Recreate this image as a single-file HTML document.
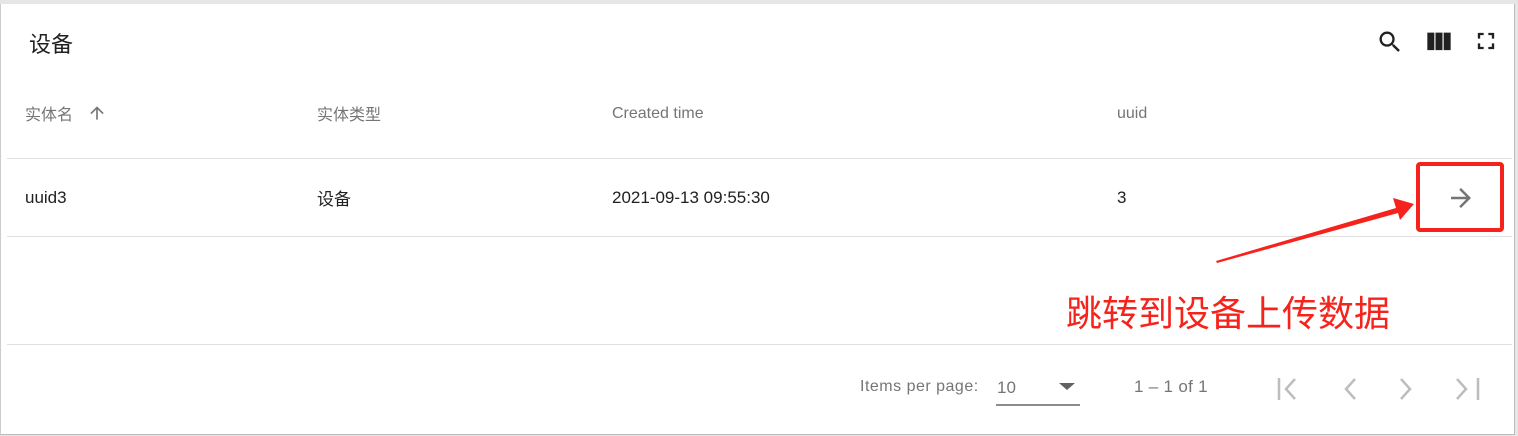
<!DOCTYPE html>
<html><head><meta charset="utf-8"><style>
*{margin:0;padding:0;box-sizing:border-box}
body{width:1518px;height:436px;background:#e6e6e6;position:relative;overflow:hidden;font-family:"Liberation Sans","Noto Sans CJK SC",sans-serif}
.card{position:absolute;left:0;top:4px;width:1515px;height:431px;background:#fff;border-left:1px solid #ccc;border-right:1px solid #bbb;border-bottom:1px solid #bbb}
.t{position:absolute;white-space:nowrap}
.h{color:#757575;font-size:16px}
.c{color:#212121;font-size:17px}
.line{position:absolute;left:7px;right:6px;height:1px;background:#e0e0e0}
</style></head><body>
<div class="card"></div>
<div class="t" style="left:29px;top:27px;font-size:22px;color:#212121">设备</div>
<svg style="position:absolute;left:1376px;top:28px" width="28" height="28" viewBox="0 0 24 24"><path fill="#212121" d="M15.5 14h-.79l-.28-.27A6.470 6.470 0 0 0 16 9.5 6.5 6.5 0 1 0 9.5 16c1.61 0 3.090-.59 4.230-1.57l.27.28v.79l5 4.99L20.49 19l-4.99-5zm-6 0C7.01 14 5 11.99 5 9.5S7.01 5 9.5 5 14 7.01 14 9.5 11.99 14 9.5 14z"/></svg>
<svg style="position:absolute;left:1425px;top:28px" width="28" height="28" viewBox="0 0 24 24"><path fill="#212121" d="M2 4h6v15H2zM9 4h6v15H9zM16 4h6v15h-6z"/></svg>
<svg style="position:absolute;left:1472px;top:27px" width="28" height="28" viewBox="0 0 24 24"><path fill="#212121" d="M7 14H5v5h5v-2H7v-3zm-2-4h2V7h3V5H5v5zm12 7h-3v2h5v-5h-2v3zM14 5v2h3v3h2V5h-5z"/></svg>
<div class="t h" style="left:25px;top:101px">实体名</div>
<svg style="position:absolute;left:87px;top:103px" width="20" height="20" viewBox="0 0 24 24"><path fill="#757575" d="M4 12l1.41 1.410L11 7.83V20h2V7.83l5.58 5.59L20 12l-8-8-8 8z"/></svg>
<div class="t h" style="left:317px;top:101px">实体类型</div>
<div class="t h" style="left:612px;top:105px">Created time</div>
<div class="t h" style="left:1117px;top:105px">uuid</div>
<div class="line" style="top:158px"></div>
<div class="t c" style="left:25px;top:188px">uuid3</div>
<div class="t c" style="left:317px;top:185px">设备</div>
<div class="t c" style="left:612px;top:188px">2021-09-13 09:55:30</div>
<div class="t c" style="left:1117px;top:188px">3</div>
<svg style="position:absolute;left:1446px;top:183px" width="30" height="30" viewBox="0 0 24 24"><path fill="#757575" d="M12 4l-1.41 1.41L16.17 11H4v2h12.17l-5.58 5.59L12 20l8-8z"/></svg>
<div class="line" style="top:236px"></div>
<div style="position:absolute;left:1416px;top:162px;width:88px;height:70px;border:4px solid #f5231b;border-radius:4px"></div>
<svg style="position:absolute;left:0;top:0" width="1518" height="436"><polygon fill="#f5231b" points="1216,261 1396,208 1393,198 1414,204 1400,220 1398,213 1217,263"/></svg>
<div class="t" style="left:1066px;top:285px;font-size:36px;color:#f5231b">跳转到设备上传数据</div>
<div class="line" style="top:344px"></div>
<div class="t" style="left:860px;top:378px;font-size:16px;color:#757575;letter-spacing:0.5px">Items per page:</div>
<div class="t" style="left:997px;top:378px;font-size:17px;color:#757575">10</div>
<div style="position:absolute;left:1059px;top:383px;border-left:8px solid transparent;border-right:8px solid transparent;border-top:7px solid #616161"></div>
<div style="position:absolute;left:996px;top:404px;width:84px;height:2px;background:#8c8c8c"></div>
<div class="t" style="left:1134px;top:377px;font-size:17px;color:#757575;letter-spacing:0.3px">1 – 1 of 1</div>
<svg style="position:absolute;left:1275px;top:375px" width="220" height="28" viewBox="0 0 220 28" fill="none" stroke="#bdbdbd" stroke-width="2.5"><path d="M4 3v22M20 4l-9 10 9 10"/><path d="M80 4l-9 10 9 10"/><path d="M126 4l9 10-9 10"/><path d="M182 4l9 10-9 10M203 3v22"/></svg>
</body></html>
